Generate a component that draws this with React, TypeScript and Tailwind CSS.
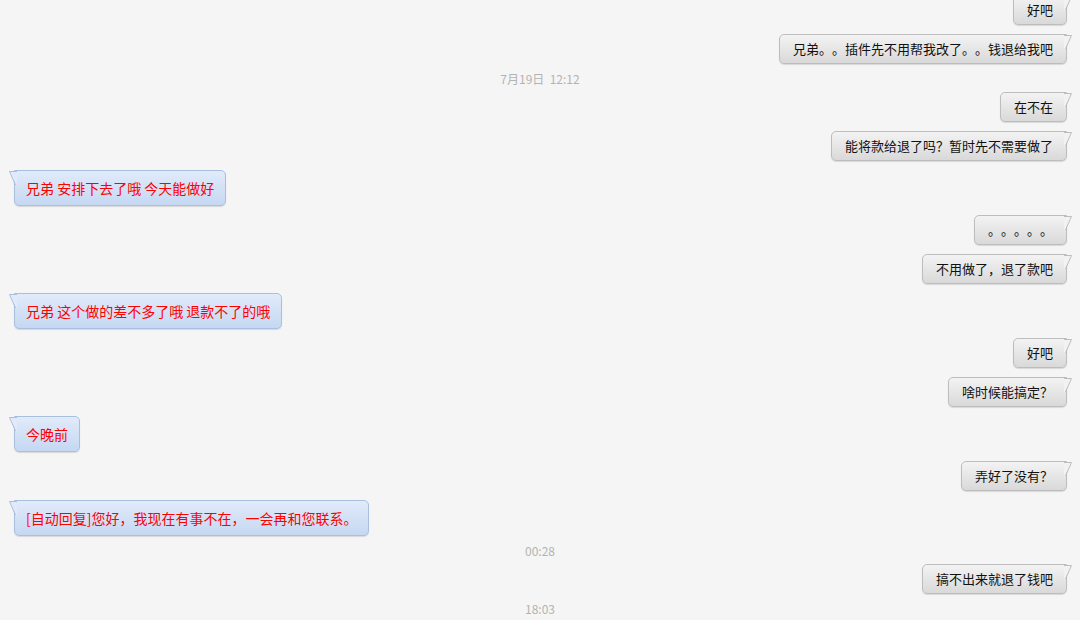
type Item =
  | { kind: "time"; text: string }
  | { kind: "me"; text: string }
  | { kind: "them"; text: string };

const items: Item[] = [
  { kind: "me", text: "好吧" },
  { kind: "me", text: "兄弟。。插件先不用帮我改了。。钱退给我吧" },
  { kind: "time", text: "7月19日  12:12" },
  { kind: "me", text: "在不在" },
  { kind: "me", text: "能将款给退了吗？暂时先不需要做了" },
  { kind: "them", text: "兄弟 安排下去了哦 今天能做好" },
  { kind: "me", text: "。。。。。" },
  { kind: "me", text: "不用做了，退了款吧" },
  { kind: "them", text: "兄弟 这个做的差不多了哦 退款不了的哦" },
  { kind: "me", text: "好吧" },
  { kind: "me", text: "啥时候能搞定？" },
  { kind: "them", text: "今晚前" },
  { kind: "me", text: "弄好了没有？" },
  { kind: "them", text: "[自动回复]您好，我现在有事不在，一会再和您联系。" },
  { kind: "time", text: "00:28" },
  { kind: "me", text: "搞不出来就退了钱吧" },
  { kind: "time", text: "18:03" },
];

const font = { fontFamily: '"Noto Sans CJK SC", "Liberation Sans", sans-serif' };

// little corner flag that sticks out of the bubble's top edge
const Tail = ({ side, fill, stroke }: { side: "left" | "right"; fill: string; stroke: string }) => (
  <svg
    width="8"
    height="15"
    viewBox="0 0 8 15"
    className={side === "right" ? "absolute top-0 right-[-6px]" : "absolute top-0 left-[-6px] -scale-x-100"}
  >
    <polygon points="0,0 7.5,0 1,14 0,14" fill={fill} />
    <polyline points="0,0.5 7.5,0.5 1.5,14" fill="none" stroke={stroke} strokeWidth="1" />
  </svg>
);

const Mine = ({ text }: { text: string }) => (
  <div className="flex justify-end pr-[13px]">
    <div className="relative h-[30px] flex items-center px-[13px] rounded-[5px] rounded-tr-none border border-[#bdbdbd] bg-gradient-to-b from-[#f3f3f3] to-[#d9d9d9] shadow-[0_1px_1px_rgba(0,0,0,0.12)] text-[13px] text-[#111] [text-spacing-trim:space-all]">
      {text}
      <Tail side="right" fill="#f2f2f2" stroke="#bdbdbd" />
    </div>
  </div>
);

const Theirs = ({ text }: { text: string }) => (
  <div className="flex justify-start pl-[14px]">
    <div className="relative h-[36px] flex items-center px-[11px] rounded-[5px] rounded-tl-none border border-[#a9bfdf] bg-gradient-to-b from-[#e1ebfa] to-[#c5d8f2] shadow-[0_1px_1px_rgba(0,0,0,0.12)] text-[14px] text-[#ff0000] [text-spacing-trim:space-all]">
      {text}
      <Tail side="left" fill="#e0eafa" stroke="#a9bfdf" />
    </div>
  </div>
);

export default function App() {
  return (
    <div className="w-[1080px] h-[620px] overflow-hidden bg-[#f5f5f5]" style={font}>
      <div className="flex flex-col gap-[9px] -mt-[5px]">
        {items.map((it, i) =>
          it.kind === "time" ? (
            <div key={i} className="h-[10px] flex items-center justify-center text-[12px] text-[#b3b3b3] whitespace-pre translate-y-[1px]">
              {it.text}
            </div>
          ) : it.kind === "me" ? (
            <Mine key={i} text={it.text} />
          ) : (
            <Theirs key={i} text={it.text} />
          )
        )}
      </div>
    </div>
  );
}
